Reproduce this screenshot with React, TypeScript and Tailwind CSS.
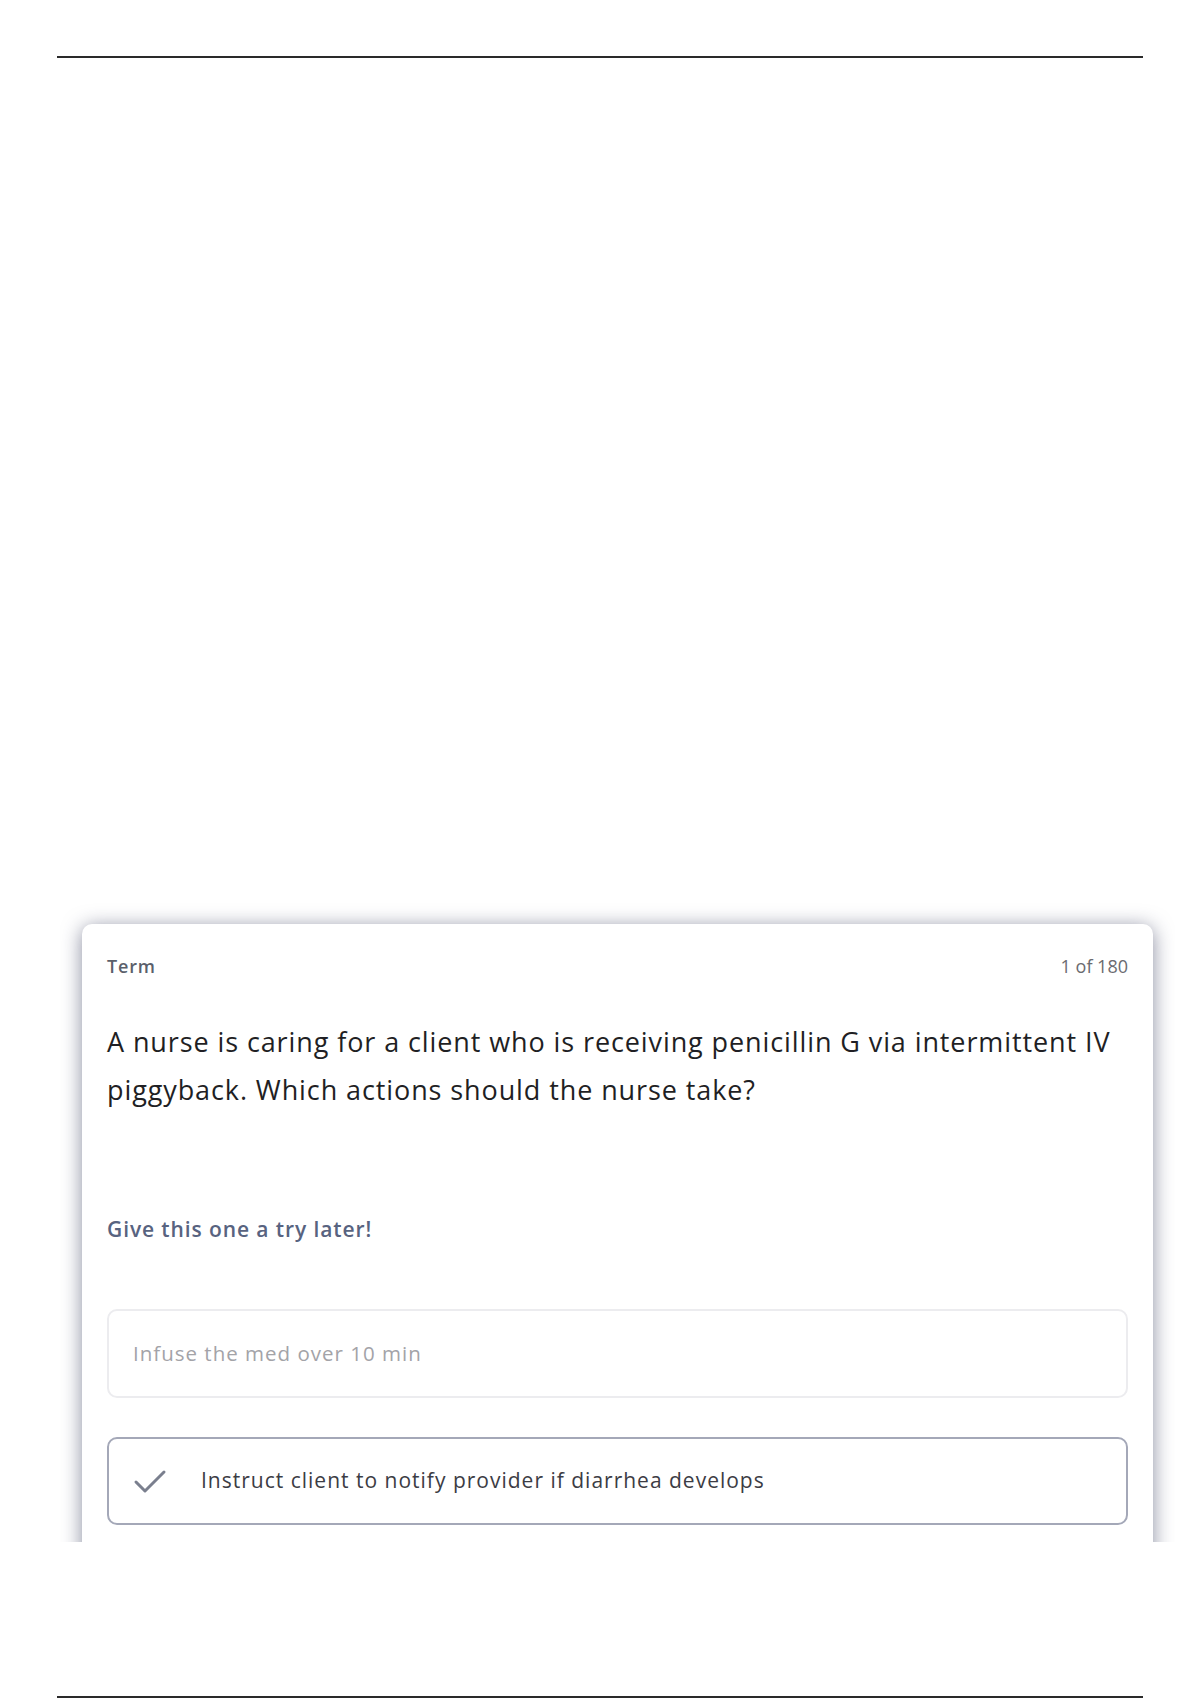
import React from "react";

export default function App() {
  return (
    <div className="w-[1200px] h-[1700px] bg-white relative flex flex-col" style={{ fontFamily: "'Open Sans', Lato, sans-serif" }}>
      <div className="mx-[57px] mt-[56px] h-[2px] bg-[#2a2a2a]" />
      <div className="mt-[842px] ml-[60px] w-[1115px] h-[642px] overflow-hidden">
        <div className="mx-[22px] mt-[24px] bg-white rounded-[10px] shadow-[0_3px_20px_rgba(40,46,80,0.55)] px-[25px] pt-[30px] pb-[200px]">
          <div className="flex items-center justify-between h-[24px]">
            <span className="text-[18px] font-semibold tracking-[0.8px] text-[#5b5f6b]">Term</span>
            <span className="text-[18px] text-[#6b6b70]">1 of 180</span>
          </div>
          <p className="mt-[40px] text-[27px] leading-[48px] tracking-[0.9px] text-[#1f1f24]">
            A nurse is caring for a client who is receiving penicillin G via intermittent IV piggyback. Which actions should the nurse take?
          </p>
          <p className="mt-[101px] text-[21px] leading-[28px] font-semibold tracking-[0.9px] text-[#586380]">Give this one a try later!</p>
          <div className="mt-[66px] h-[89px] rounded-[10px] border-2 border-[#ececef] flex items-center px-[24px]">
            <span className="text-[20.5px] tracking-[1px] text-[#a3a3a8]">Infuse the med over 10 min</span>
          </div>
          <div className="mt-[39px] h-[88px] rounded-[10px] border-2 border-[#a4a8b8] flex items-center pl-[24px]">
            <svg width="34" height="28" viewBox="0 0 34 28" className="shrink-0">
              <path d="M3 15 L12 24 L31 5" fill="none" stroke="#7a7f8e" strokeWidth="3" strokeLinecap="round" strokeLinejoin="round" />
            </svg>
            <span className="ml-[34px] text-[21px] tracking-[1px] text-[#3c3c44]">Instruct client to notify provider if diarrhea develops</span>
          </div>
        </div>
      </div>
      <div className="mx-[57px] mt-[154px] h-[2px] bg-[#2a2a2a]" />
    </div>
  );
}
